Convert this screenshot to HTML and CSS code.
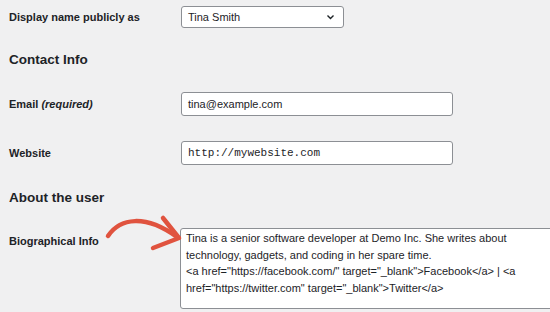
FILE: index.html
```html
<!DOCTYPE html>
<html lang="en">
<head>
    <meta charset="UTF-8">
    <meta name="viewport" content="width=device-width, initial-scale=1.0">
    <title>Profile</title>
    <link rel="stylesheet" href="styles.css">
</head>
<body>
    <div class="profile">
        <div class="row row-select">
            <label class="label">Display name publicly as</label>
            <div class="select">
                <span>Tina Smith</span>
                <svg class="chevron" width="9" height="6" viewBox="0 0 9 6"><path d="M1.5 1.5l3 3 3-3" fill="none" stroke="#1d2327" stroke-width="1.4"/></svg>
            </div>
        </div>

        <h2>Contact Info</h2>

        <div class="row">
            <label class="label">Email <em>(required)</em></label>
            <div class="input">tina@example.com</div>
        </div>
        <div class="row">
            <label class="label">Website</label>
            <div class="input mono">http://mywebsite.com</div>
        </div>

        <h2 class="about">About the user</h2>

        <div class="row row-bio">
            <label class="label">Biographical Info</label>
            <div class="textarea">Tina is a senior software developer at Demo Inc. She writes about technology, gadgets, and coding in her spare time.<br>&lt;a href="https://facebook.com/" target="_blank"&gt;Facebook&lt;/a&gt; | &lt;a href="https://twitter.com" target="_blank"&gt;Twitter&lt;/a&gt;</div>
            <svg class="arrow" width="90" height="50" viewBox="0 0 90 50">
                <path d="M13 30 C 25 12, 50 8, 82 31" fill="none" stroke="#e0533f" stroke-width="4.5" stroke-linecap="round"/>
                <path d="M68 12 L84 32 L58 42" fill="none" stroke="#e0533f" stroke-width="4.5" stroke-linecap="round" stroke-linejoin="round"/>
            </svg>
        </div>
    </div>
</body>
</html>
```

FILE: styles.css
```css
body {
    margin: 0;
    background: #f0f0f1;
    color: #1d2327;
    font-family: "Liberation Sans", Arial, sans-serif;
    font-size: 11px;
    overflow: hidden;
}
.profile {
    padding: 6px 0 0 9px;
}
.row {
    display: flex;
    align-items: center;
    margin-bottom: 25px;
}
.row-select {
    margin-bottom: 0;
}
.label {
    width: 172px;
    flex-shrink: 0;
    font-weight: bold;
}
.label em {
    font-style: italic;
}
h2 {
    font-size: 13.5px;
    margin: 24px 0 25px;
}
h2.about {
    margin: 24px 0 0;
}
.select {
    height: 20px;
    background: white;
    border: 1px solid #8c8f94;
    border-radius: 3px;
    display: flex;
    align-items: center;
    justify-content: space-between;
    padding: 0 8px 0 6px;
    width: 147px;
}
.input {
    width: 264px;
    height: 22px;
    line-height: 22px;
    background: white;
    border: 1px solid #8c8f94;
    border-radius: 3px;
    padding: 0 0 0 6px;
}
.mono {
    font-family: "Liberation Mono", "Courier New", monospace;
}
.row-bio {
    position: relative;
    align-items: flex-start;
    margin: 23px 0 0;
}
.row-bio .label {
    margin-top: 7px;
    width: 171px;
}
.textarea {
    width: 370px;
    height: 78px;
    background: white;
    border: 1px solid #8c8f94;
    border-radius: 3px;
    padding: 1px 0 0 5px;
    line-height: 16.5px;
    flex-shrink: 0;
}
.arrow {
    position: absolute;
    left: 86px;
    top: -22px;
}
```
